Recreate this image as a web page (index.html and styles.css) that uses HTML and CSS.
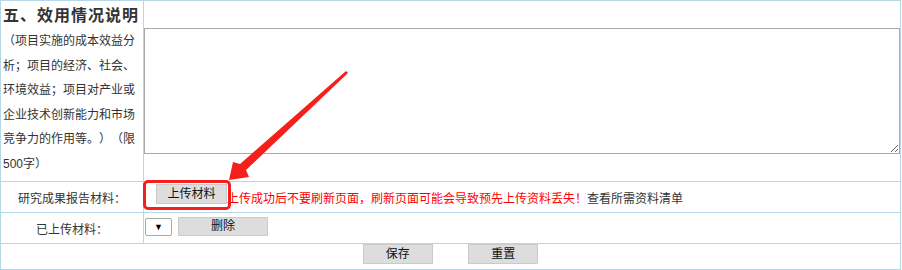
FILE: index.html
```html
<!DOCTYPE html>
<html lang="zh-CN">
<head>
  <meta charset="UTF-8" />
  <title>效用情况说明</title>
  <link rel="stylesheet" href="styles.css">
</head>
<body>
  <div class="page">
    <table class="form-table">
      <colgroup>
        <col class="col-label" />
        <col class="col-field" />
      </colgroup>
      <tr class="row-effect">
        <td class="label-cell desc-cell">
          <div class="section-title">五、效用情况说明</div>
          <div class="section-note">（项目实施的成本效益分析；项目的经济、社会、环境效益；项目对产业或企业技术创新能力和市场竞争力的作用等。）（限500字）</div>
        </td>
        <td class="field-cell"><textarea class="effect-text"></textarea></td>
      </tr>
      <tr class="row-line">
        <td class="label-cell">研究成果报告材料：</td>
        <td class="field-cell"><button type="button" class="btn btn-upload">上传材料</button><span class="warn">上传成功后不要刷新页面，刷新页面可能会导致预先上传资料丢失！</span><a class="list-link">查看所需资料清单</a></td>
      </tr>
      <tr class="row-line">
        <td class="label-cell">已上传材料：</td>
        <td class="field-cell"><span class="file-select">▼</span><button type="button" class="btn btn-delete">删除</button></td>
      </tr>
      <tr class="row-actions">
        <td colspan="2" class="action-cell">
          <button type="button" class="btn btn-action">保存</button>
          <button type="button" class="btn btn-action">重置</button>
        </td>
      </tr>
    </table>

    <!-- annotation drawn over the form -->
    <div class="mark-box"></div>
    <svg class="mark-arrow" width="902" height="270" viewBox="0 0 902 270">
      <polygon points="346,71 348,73 246,170 249,177 229,180 233,162 240,164" fill="#f5201c" />
    </svg>
  </div>
</body>
</html>
```

FILE: styles.css
```css
body {
  margin: 0;
  padding: 0;
  background-color: #fff;
  font-family: "Liberation Sans", "Noto Sans CJK SC", sans-serif;
  font-size: 12px;
  color: #333;
  text-spacing-trim: space-all;
}
.page {
  position: relative;
  width: 902px;
  height: 270px;
  overflow: hidden;
}
.form-table {
  width: 901px;
  border-collapse: collapse;
  table-layout: fixed;
}
.col-label {
  width: 143px;
}
.form-table td {
  border: 1px solid #b4d8e8;
  padding: 0;
}
.label-cell {
  text-align: center;
  vertical-align: middle;
}
.desc-cell {
  text-align: left;
  vertical-align: top;
  padding: 2px 2px 0 2px !important;
  height: 178px;
}
.section-title {
  font-size: 16px;
  font-weight: bold;
  letter-spacing: 1px;
  line-height: 26px;
  color: #333;
}
.section-note {
  line-height: 24.5px;
  color: #333;
}
.field-cell {
  vertical-align: middle;
}
.effect-text {
  display: block;
  box-sizing: border-box;
  width: 100%;
  height: 126px;
  margin: 0;
  border: 1px solid #a9a9a9;
  font-size: 12px;
}
.row-line td {
  height: 30px;
}
.btn {
  font-family: "Liberation Sans", "Noto Sans CJK SC", sans-serif;
  font-size: 12px;
  color: #111;
  background-color: #dddddd;
  border: 1px solid #cbcbcb;
  border-radius: 0;
  padding: 0;
  height: 20px;
  line-height: 18px;
  cursor: pointer;
}
.btn-upload {
  width: 71px;
  margin-left: 12px;
  vertical-align: middle;
  margin-bottom: 6px;
}
.warn {
  color: #f00;
  vertical-align: middle;
}
.list-link {
  color: #333;
  vertical-align: middle;
}
.file-select {
  display: inline-block;
  box-sizing: border-box;
  width: 27px;
  height: 18px;
  margin-left: 1px;
  border: 1px solid #a9a9a9;
  border-radius: 2px;
  background-color: #fff;
  color: #000;
  font-size: 9px;
  line-height: 16px;
  text-align: center;
  vertical-align: middle;
  margin-bottom: 2px;
}
.btn-delete {
  width: 90px;
  height: 19px;
  line-height: 17px;
  margin-left: 6px;
  vertical-align: middle;
  margin-bottom: 4px;
}
.row-actions td {
  height: 25px;
}
.action-cell {
  text-align: center;
  vertical-align: top;
}
.btn-action {
  width: 70px;
  margin: 0 16px;
}
.mark-box {
  position: absolute;
  left: 143px;
  top: 180px;
  width: 88px;
  height: 30px;
  box-sizing: border-box;
  border: 3px solid #f5201c;
  border-radius: 5px;
}
.mark-arrow {
  position: absolute;
  left: 0;
  top: 0;
  pointer-events: none;
}
```
